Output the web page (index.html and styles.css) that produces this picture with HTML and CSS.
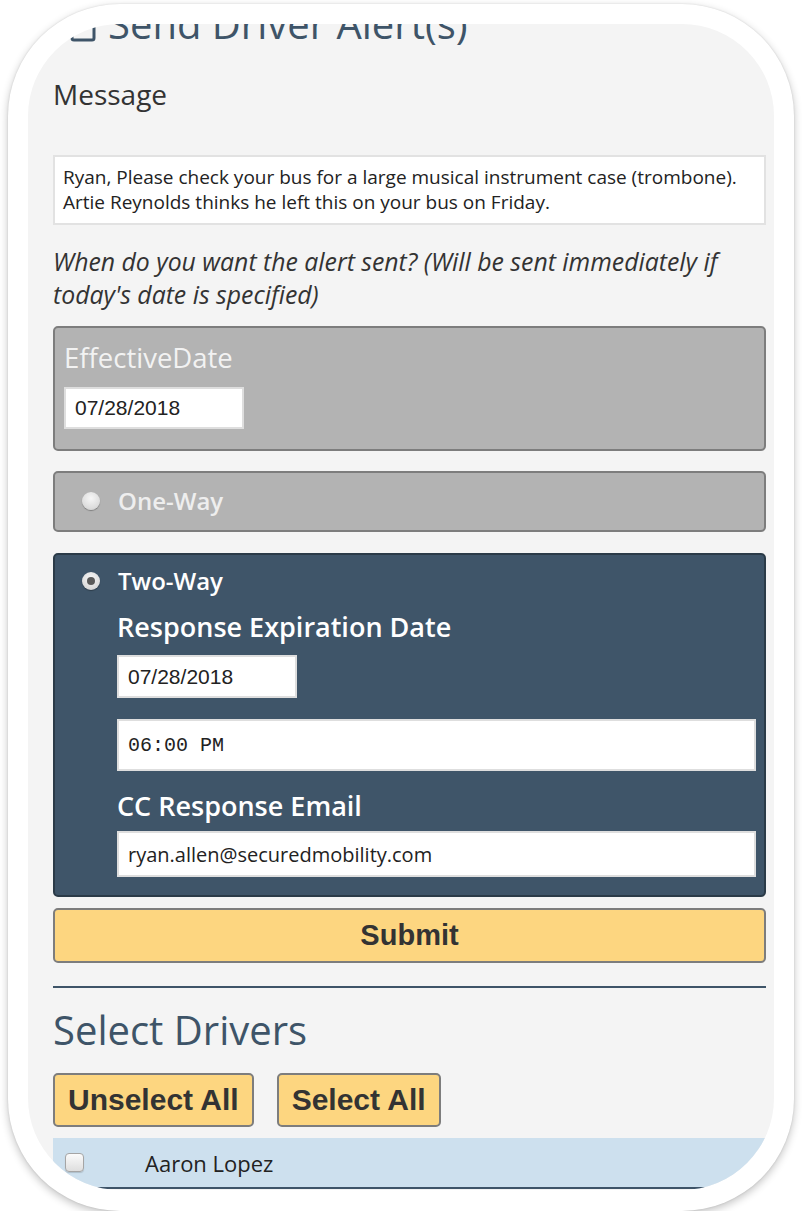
FILE: index.html
```html
<!DOCTYPE html>
<html lang="en">
<head>
<meta charset="utf-8">
<title>Send Driver Alert(s)</title>
<link rel="stylesheet" href="styles.css">
</head>
<body>
<div class="device">
  <div class="screen">
    <div class="content">
      <h1 class="title">
        <svg class="title-icon" width="26" height="26" viewBox="0 0 26 26" aria-hidden="true"><rect x="2" y="2" width="22" height="22" rx="2" fill="none" stroke="#3e5468" stroke-width="3"/></svg>
        <span>Send Driver Alert(s)</span>
      </h1>
      <h3 class="section-label">Message</h3>
      <div class="message-box">Ryan, Please check your bus for a large musical instrument case (trombone). Artie Reynolds thinks he left this on your bus on Friday.</div>
      <p class="hint">When do you want the alert sent? (Will be sent immediately if today's date is specified)</p>

      <div class="panel panel-gray panel-date">
        <div class="panel-label">EffectiveDate</div>
        <div class="field field-date">07/28/2018</div>
      </div>

      <div class="panel panel-gray panel-option">
        <div class="option-row">
          <span class="radio"></span>
          <span class="option-label option-muted">One-Way</span>
        </div>
      </div>

      <div class="panel panel-dark">
        <div class="option-row">
          <span class="radio radio-checked"></span>
          <span class="option-label">Two-Way</span>
        </div>
        <div class="sub">
          <div class="sub-label">Response Expiration Date</div>
          <div class="field field-date field-date-tall">07/28/2018</div>
          <div class="field field-time">06:00 PM</div>
          <div class="sub-label sub-label-email">CC Response Email</div>
          <div class="field field-email">ryan.allen@securedmobility.com</div>
        </div>
      </div>

      <button class="btn btn-submit" type="button">Submit</button>

      <hr class="divider">

      <h2 class="drivers-title">Select Drivers</h2>
      <div class="btn-row">
        <button class="btn btn-small" type="button">Unselect All</button>
        <button class="btn btn-small" type="button">Select All</button>
      </div>

      <div class="driver-row">
        <span class="checkbox"></span>
        <span class="driver-name">Aaron Lopez</span>
      </div>
    </div>
  </div>
</div>
</body>
</html>
```
FILE: styles.css
```css
html, body {
  margin: 0;
  padding: 0;
  background: #ffffff;
}

body {
  font-family: "Open Sans", "Noto Sans", sans-serif;
  color: #333333;
}

.device {
  margin: 4px 8px 0 8px;
  width: 786px;
  height: 1207px;
  box-sizing: border-box;
  padding: 20px 20px 21px 20px;
  background: #ffffff;
  border-radius: 112px;
  box-shadow: 0 3px 9px rgba(0, 0, 0, 0.24), 0 0 2px rgba(0, 0, 0, 0.12);
}

.screen {
  width: 746px;
  height: 1166px;
  background: #f4f4f4;
  border-radius: 92px;
  overflow: hidden;
}

.content {
  padding: 0 8px 0 25px;
  margin-top: -26px;
}

.title {
  margin: 0;
  display: flex;
  align-items: flex-end;
  gap: 12px;
  padding-left: 17px;
  font-size: 40px;
  line-height: 52px;
  font-weight: 400;
  color: #3e5468;
  white-space: nowrap;
}

.title-icon {
  margin-bottom: 8px;
}

.section-label {
  margin: 28px 0 0 0;
  font-size: 28px;
  line-height: 32px;
  font-weight: 400;
  color: #333333;
}

.message-box {
  margin-top: 45px;
  background: #ffffff;
  border: 2px solid #e2e2e2;
  padding: 8px 8px;
  font-size: 19px;
  line-height: 25px;
  color: #222222;
}

.hint {
  margin: 20px 0 0 0;
  font-size: 24.8px;
  line-height: 33px;
  font-style: italic;
  color: #333333;
}

.panel {
  border: 2px solid #7d7d7d;
  border-radius: 5px;
}

.panel-gray {
  background: #b3b3b3;
  margin-top: 15px;
}

.panel-date {
  padding: 12px 9px 20px 9px;
}

.panel-label {
  font-size: 27.5px;
  line-height: 35px;
  color: #f2f2f2;
  margin-bottom: 12px;
}

.field {
  box-sizing: border-box;
  background: #ffffff;
  border: 2px solid #dedede;
  color: #222222;
  display: flex;
  align-items: center;
  padding: 0 9px;
}

.field-date {
  width: 180px;
  height: 42px;
  font-family: "Liberation Sans", Arial, sans-serif;
  font-size: 21px;
}

.field-date-tall {
  height: 43px;
}

.panel-option {
  margin-top: 20px;
  padding: 10px 0 11px 0;
}

.option-row {
  display: flex;
  align-items: center;
  padding-left: 27px;
}

.radio {
  width: 18px;
  height: 18px;
  border-radius: 50%;
  background: radial-gradient(circle at 50% 35%, #f6f6f6 0%, #dddddd 65%, #c4c4c4 100%);
  box-shadow: 0 1px 1px rgba(0, 0, 0, 0.3);
  flex: none;
  position: relative;
}

.radio-checked::after {
  content: "";
  position: absolute;
  left: 5px;
  top: 5px;
  width: 8px;
  height: 8px;
  border-radius: 50%;
  background: #5a5a5a;
}

.option-label {
  margin-left: 18px;
  font-size: 24px;
  line-height: 36px;
  font-weight: 600;
  color: #ffffff;
}

.option-muted {
  color: #eeeeee;
}

.panel-dark {
  margin-top: 21px;
  background: #3f5569;
  border-color: #2b3b48;
  padding: 8px 8px 18px 0;
}

.sub {
  padding-left: 62px;
}

.sub-label {
  font-size: 27px;
  line-height: 38px;
  font-weight: 600;
  color: #ffffff;
  margin-top: 9px;
  margin-bottom: 9px;
}

.sub-label-email {
  margin-top: 16px;
  margin-bottom: 6px;
}

.field-time {
  margin-top: 21px;
  height: 52px;
  font-family: "Liberation Mono", "Courier New", monospace;
  font-size: 20px;
}

.field-email {
  height: 46px;
  font-size: 20px;
}

.btn {
  display: block;
  box-sizing: border-box;
  background: #fdd680;
  border: 2px solid #7d7d7d;
  border-radius: 5px;
  color: #333333;
  font-family: "Liberation Sans", Arial, sans-serif;
  font-weight: 700;
  font-size: 29px;
  padding: 0;
  cursor: pointer;
}

.btn-submit {
  width: 100%;
  height: 55px;
  margin-top: 11px;
}

.divider {
  margin: 23px 0 0 0;
  border: none;
  height: 2px;
  background: #3e5468;
}

.drivers-title {
  margin: 16px 0 0 0;
  font-size: 40px;
  line-height: 52px;
  font-weight: 400;
  color: #3e5468;
}

.btn-row {
  display: flex;
  gap: 23px;
  margin-top: 17px;
}

.btn-small {
  height: 54px;
  padding: 0 13px;
  font-size: 30px;
}

.driver-row {
  margin-top: 11px;
  margin-right: -10px;
  height: 49px;
  background: #cde0ee;
  border-bottom: 2px solid #3e5468;
  display: flex;
  align-items: center;
  padding-left: 12px;
}

.checkbox {
  width: 17px;
  height: 17px;
  border: 1px solid #a5a5a5;
  border-radius: 4px;
  background: linear-gradient(#fbfbfb, #dedede);
  box-shadow: 0 1px 1px rgba(0, 0, 0, 0.15);
  flex: none;
}

.driver-name {
  margin-left: 61px;
  font-size: 22px;
  color: #222222;
}
```
